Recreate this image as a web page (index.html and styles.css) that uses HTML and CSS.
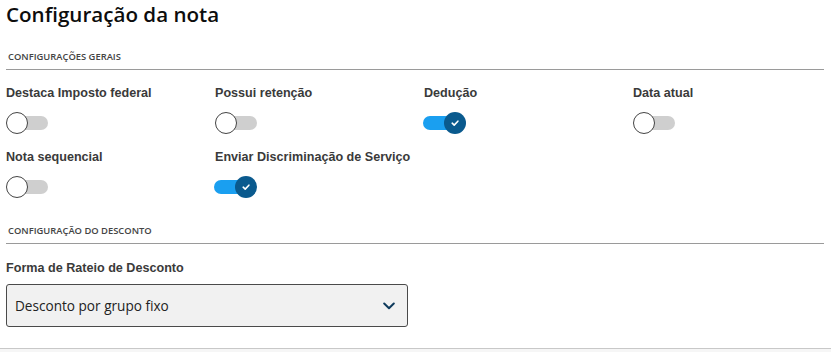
FILE: index.html
```html
<!DOCTYPE html>
<html lang="pt-BR">
<head>
<meta charset="utf-8">
<link rel="stylesheet" href="styles.css">
</head>
<body>
<div class="page">
  <h1 class="title">Configuração da nota</h1>

  <section class="section section-general">
    <div class="section-head">CONFIGURAÇÕES GERAIS</div>
    <div class="grid">
      <div class="field">
        <div class="label">Destaca Imposto federal</div>
        <span class="toggle"><span class="track"></span><span class="knob"></span></span>
      </div>
      <div class="field">
        <div class="label">Possui retenção</div>
        <span class="toggle"><span class="track"></span><span class="knob"></span></span>
      </div>
      <div class="field">
        <div class="label">Dedução</div>
        <span class="toggle on"><span class="track"></span><span class="knob"><svg viewBox="0 0 10 10" width="10" height="10"><path d="M2.2 5.2 L4.2 7.1 L7.9 3.2" fill="none" stroke="#fff" stroke-width="1.6" stroke-linecap="round" stroke-linejoin="round"/></svg></span></span>
      </div>
      <div class="field">
        <div class="label">Data atual</div>
        <span class="toggle"><span class="track"></span><span class="knob"></span></span>
      </div>
      <div class="field">
        <div class="label">Nota sequencial</div>
        <span class="toggle"><span class="track"></span><span class="knob"></span></span>
      </div>
      <div class="field">
        <div class="label">Enviar Discriminação de Serviço</div>
        <span class="toggle on"><span class="track"></span><span class="knob"><svg viewBox="0 0 10 10" width="10" height="10"><path d="M2.2 5.2 L4.2 7.1 L7.9 3.2" fill="none" stroke="#fff" stroke-width="1.6" stroke-linecap="round" stroke-linejoin="round"/></svg></span></span>
      </div>
    </div>
  </section>

  <section class="section section-discount">
    <div class="section-head">CONFIGURAÇÃO DO DESCONTO</div>
    <div class="label select-label">Forma de Rateio de Desconto</div>
    <div class="select">
      <span class="select-text">Desconto por grupo fixo</span>
      <svg class="chevron" viewBox="0 0 12 8" width="12" height="8"><path d="M1.2 1.5 L6 6.2 L10.8 1.5" fill="none" stroke="#0e3a5c" stroke-width="2" stroke-linecap="round" stroke-linejoin="round"/></svg>
    </div>
  </section>
</div>
<div class="footer"></div>
</body>
</html>
```

FILE: styles.css
```css
html, body {
  margin: 0;
  padding: 0;
  background: #fff;
}
body {
  width: 831px;
  height: 352px;
  overflow: hidden;
  font-family: "Open Sans", sans-serif;
  color: #1a1a1a;
}
.page {
  padding: 0 7px 0 6px;
  height: 348px;
  box-sizing: border-box;
}
.title {
  margin: 0;
  padding-top: 1px;
  font-size: 20.6px;
  line-height: 26px;
  font-weight: 600;
  color: #0d0d0d;
}
.section-head {
  font-size: 9.4px;
  font-weight: 600;
  color: #444;
  padding-left: 2px;
  line-height: 12px;
  padding-bottom: 6px;
  border-bottom: 1px solid #9a9a9a;
}
.section-general .section-head {
  margin-top: 24px;
}
.grid {
  display: grid;
  grid-template-columns: repeat(4, 209px);
  row-gap: 14px;
  padding-top: 15px;
}
.label {
  font-family: "Liberation Sans", Arial, sans-serif;
  font-weight: bold;
  font-size: 12.6px;
  line-height: 16px;
  color: #3a3a3a;
}
.toggle {
  position: relative;
  display: block;
  width: 44px;
  height: 24px;
  margin-top: 10px;
}
.track {
  position: absolute;
  left: 2px;
  top: 5px;
  width: 40px;
  height: 14px;
  border-radius: 7px;
  background: #cfcfcf;
}
.knob {
  position: absolute;
  left: 0;
  top: 1px;
  width: 22px;
  height: 22px;
  box-sizing: border-box;
  border-radius: 50%;
  background: #fff;
  border: 1.5px solid #444;
  display: flex;
  align-items: center;
  justify-content: center;
}
.toggle.on .track {
  background: #1a9ff0;
  left: -1px;
  width: 38px;
}
.toggle.on .knob {
  left: 20px;
  background: #0a5a8e;
  border: none;
}
.section-discount .section-head {
  margin-top: 26px;
}
.select-label {
  margin-top: 16px;
}
.select {
  margin-top: 8px;
  width: 402px;
  height: 43px;
  box-sizing: border-box;
  border: 1px solid #4a4a4a;
  border-radius: 3px;
  background: #f1f1f1;
  display: flex;
  align-items: center;
  justify-content: space-between;
  padding: 0 12px 0 8px;
}
.select-text {
  font-size: 13.6px;
  color: #222;
}
.chevron {
  display: block;
}
.footer {
  border-top: 1px solid #c8c8c8;
  height: 3px;
  background: #f6f6f6;
}
```
